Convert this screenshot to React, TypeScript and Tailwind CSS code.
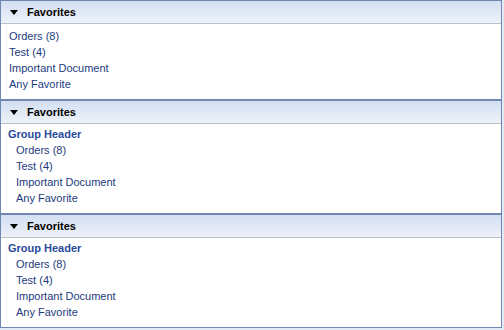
const items = ["Orders (8)", "Test (4)", "Important Document", "Any Favorite"];

function Header() {
  return (
    <div className="h-[23px] flex items-center bg-gradient-to-b from-[#d3dff2] to-[#eef2f8] border-b border-[#b7c0cc]">
      <svg width="8" height="5" viewBox="0 0 8 5" className="ml-[9px]">
        <polygon points="0,0 8,0 4,5" fill="#000" />
      </svg>
      <span className="ml-[9px] text-[11px] font-bold text-black">Favorites</span>
    </div>
  );
}

function Panel({ grouped }: { grouped?: boolean }) {
  return (
    <div className="border border-[#6f88b2] bg-white">
      <Header />
      {grouped ? (
        <div className="pt-[2px] pb-[7px] leading-[16px] text-[11px]">
          <div className="pl-[7px] font-bold text-[#2a4a9c]">Group Header</div>
          {items.map((t) => (
            <div key={t} className="pl-[15px] text-[#1d3a7e]">
              {t}
            </div>
          ))}
        </div>
      ) : (
        <div className="pt-[4px] pb-[7px] leading-[16px] text-[11px]">
          {items.map((t) => (
            <div key={t} className="pl-[8px] text-[#1d3a7e]">
              {t}
            </div>
          ))}
        </div>
      )}
    </div>
  );
}

export default function App() {
  return (
    <div
      className="w-[504px] h-[330px] bg-[#e2eaf6] overflow-hidden"
      style={{ fontFamily: '"Liberation Sans", Arial, sans-serif' }}
    >
      <div className="w-[502px]">
        <Panel />
        <Panel grouped />
        <Panel grouped />
      </div>
    </div>
  );
}
